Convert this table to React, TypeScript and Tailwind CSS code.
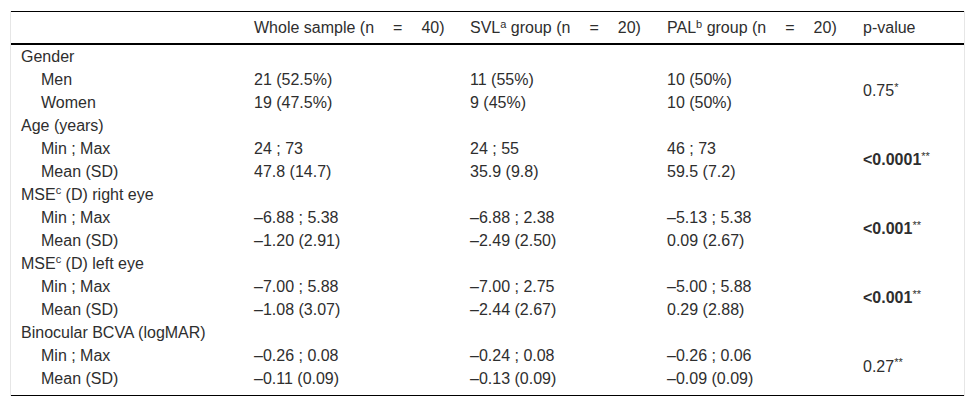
import type { FC, ReactNode } from 'react';

type Row = {
  label: string;
  sup?: string;
  rest?: string;
  sub: [string, string, string, string][];
  p: ReactNode;
};

const rows: Row[] = [
  {
    label: 'Gender',
    sub: [
      ['Men', '21 (52.5%)', '11 (55%)', '10 (50%)'],
      ['Women', '19 (47.5%)', '9 (45%)', '10 (50%)'],
    ],
    p: (
      <>
        0.75<sup className="text-[11px]">*</sup>
      </>
    ),
  },
  {
    label: 'Age (years)',
    sub: [
      ['Min ; Max', '24 ; 73', '24 ; 55', '46 ; 73'],
      ['Mean (SD)', '47.8 (14.7)', '35.9 (9.8)', '59.5 (7.2)'],
    ],
    p: (
      <>
        <b>&lt;0.0001</b>
        <sup className="text-[11px]">**</sup>
      </>
    ),
  },
  {
    label: 'MSE',
    sup: 'c',
    rest: ' (D) right eye',
    sub: [
      ['Min ; Max', '\u20136.88 ; 5.38', '\u20136.88 ; 2.38', '\u20135.13 ; 5.38'],
      ['Mean (SD)', '\u20131.20 (2.91)', '\u20132.49 (2.50)', '0.09 (2.67)'],
    ],
    p: (
      <>
        <b>&lt;0.001</b>
        <sup className="text-[11px]">**</sup>
      </>
    ),
  },
  {
    label: 'MSE',
    sup: 'c',
    rest: ' (D) left eye',
    sub: [
      ['Min ; Max', '\u20137.00 ; 5.88', '\u20137.00 ; 2.75', '\u20135.00 ; 5.88'],
      ['Mean (SD)', '\u20131.08 (3.07)', '\u20132.44 (2.67)', '0.29 (2.88)'],
    ],
    p: (
      <>
        <b>&lt;0.001</b>
        <sup className="text-[11px]">**</sup>
      </>
    ),
  },
  {
    label: 'Binocular BCVA (logMAR)',
    sub: [
      ['Min ; Max', '\u20130.26 ; 0.08', '\u20130.24 ; 0.08', '\u20130.26 ; 0.06'],
      ['Mean (SD)', '\u20130.11 (0.09)', '\u20130.13 (0.09)', '\u20130.09 (0.09)'],
    ],
    p: (
      <>
        0.27<sup className="text-[11px]">**</sup>
      </>
    ),
  },
];

const NHead: FC<{ n: number }> = ({ n }) => (
  <>
    (n<span className="inline-block w-[19px]" />=<span className="inline-block w-[19px]" />
    {n})
  </>
);

const App: FC = () => {
  const last = rows.length - 1;
  return (
    <div className="bg-white w-[975px] h-[407px] pt-[11px] pl-[10px]">
      <div className="w-[955px] border-x border-[#e6e6e6]">
        <table
          className="w-[953px] table-fixed border-collapse text-[16px] text-[#2e2e2e] leading-[23px]"
          style={{ fontFamily: '"Liberation Sans", Arial, sans-serif' }}
        >
          <colgroup>
            <col className="w-[233px]" />
            <col className="w-[216px]" />
            <col className="w-[197px]" />
            <col className="w-[196px]" />
            <col className="w-[111px]" />
          </colgroup>
          <thead>
            <tr className="border-t border-black border-b-2">
              <th className="h-[32px]" />
              <th className="pl-[10px] pt-[1px] text-left font-normal whitespace-nowrap">
                Whole sample <NHead n={40} />
              </th>
              <th className="pl-[10px] pt-[1px] text-left font-normal whitespace-nowrap">
                SVL<sup className="text-[11px]">a</sup> group <NHead n={20} />
              </th>
              <th className="pl-[10px] pt-[1px] text-left font-normal whitespace-nowrap">
                PAL<sup className="text-[11px]">b</sup> group <NHead n={20} />
              </th>
              <th className="pl-[10px] pt-[1px] text-left font-normal">p-value</th>
            </tr>
          </thead>
          <tbody className="border-b border-black">
            {rows.map((r, i) => (
              <>
                <tr key={`h${i}`} className="h-[23px]">
                  <td className="pl-[10px] whitespace-nowrap" colSpan={5}>
                    {r.label}
                    {r.sup && <sup className="text-[11px]">{r.sup}</sup>}
                    {r.rest}
                  </td>
                </tr>
                {r.sub.map((s, j) => (
                  <tr
                    key={`r${i}${j}`}
                    className={i === last && j === 1 ? 'h-[29px] align-top' : 'h-[23px]'}
                  >
                    <td className="pl-[30px]">{s[0]}</td>
                    <td className="pl-[10px]">{s[1]}</td>
                    <td className="pl-[10px]">{s[2]}</td>
                    <td className="pl-[10px]">{s[3]}</td>
                    {j === 0 && (
                      <td rowSpan={2} className="pl-[10px] align-middle">
                        <span className={i === last ? 'relative top-[-3px]' : ''}>{r.p}</span>
                      </td>
                    )}
                  </tr>
                ))}
              </>
            ))}
          </tbody>
        </table>
      </div>
    </div>
  );
};

export default App;
